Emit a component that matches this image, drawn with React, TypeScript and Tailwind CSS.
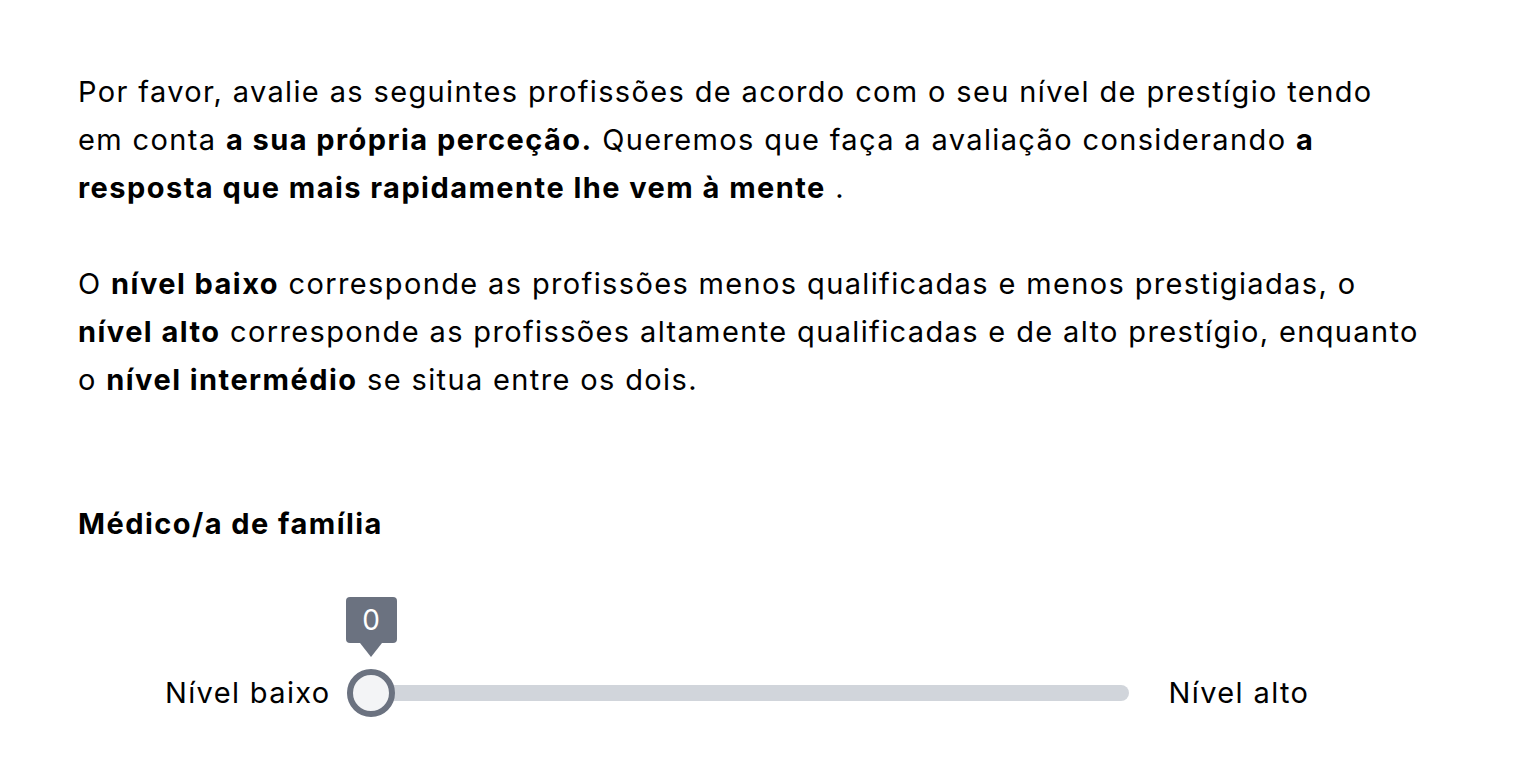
const Slider = ({ value }: { value: number }) => {
  return (
    <div className="relative h-12 w-[782px]">
      <div className="absolute left-0 right-0 top-[16px] h-4 rounded-full bg-[#d1d5db]" />
      <div className="absolute left-0 top-0 h-12 w-12 rounded-full border-[6px] border-[#6b7280] bg-[#f3f4f6]" />
      <div className="absolute left-[-1px] top-[-72px] flex flex-col items-center">
        <div className="flex h-[46px] w-[51px] items-center justify-center rounded-[4px] bg-[#6b7280] text-[28px] tracking-normal text-white">
          {value}
        </div>
        <div className="h-0 w-0 border-x-[11px] border-t-[14px] border-x-transparent border-t-[#6b7280]" />
      </div>
    </div>
  );
};

export default function App() {
  return (
    <div className="min-h-screen bg-white font-['Inter',sans-serif] text-[29px] leading-[48px] tracking-[0.047em] text-black">
      <div className="w-[1424px] pl-[78px] pt-[68px]">
        <p>
          Por favor, avalie as seguintes profissões de acordo com o seu nível de prestígio tendo em conta{" "}
          <b className="font-bold tracking-[0.05em]">a sua própria perceção.</b> Queremos que faça a avaliação considerando{" "}
          <b className="font-bold tracking-[0.05em]">a resposta que mais rapidamente lhe vem à mente</b> .
        </p>
        <p className="mt-12">
          O <b className="font-bold tracking-[0.05em]">nível baixo</b> corresponde as profissões menos qualificadas e menos prestigiadas, o{" "}
          <b className="font-bold tracking-[0.05em]">nível alto</b> corresponde as profissões altamente qualificadas e de alto prestígio, enquanto o{" "}
          <b className="font-bold tracking-[0.05em]">nível intermédio</b> se situa entre os dois.
        </p>
        <h2 className="mt-24 font-bold tracking-[0.05em]">Médico/a de família</h2>
        <div className="mt-[121px] flex items-center pl-[87px]">
          <span>Nível baixo</span>
          <div className="ml-[16px]">
            <Slider value={0} />
          </div>
          <span className="ml-[40px]">Nível alto</span>
        </div>
      </div>
    </div>
  );
}
